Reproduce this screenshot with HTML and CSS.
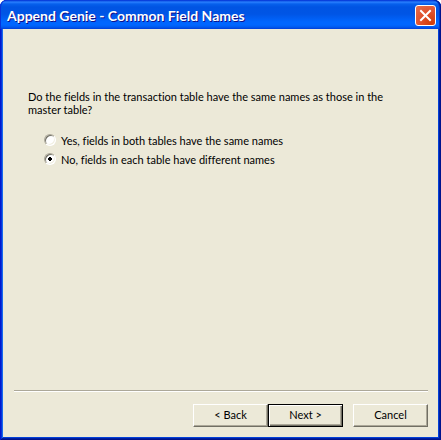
FILE: index.html
```
<!DOCTYPE html>
<html lang="en">
<head>
<meta charset="utf-8">
<title>Append Genie - Common Field Names</title>
<link rel="stylesheet" href="styles.css">
</head>
<body>
<main class="window">
  <header class="titlebar">
    <h1 class="title">Append Genie - Common Field Names</h1>
    <button class="close" type="button" aria-label="Close">
      <svg viewBox="0 0 19 19" width="19" height="19" aria-hidden="true">
        <path d="M5 5 L14 14 M14 5 L5 14" stroke="#fff" stroke-width="2" stroke-linecap="square" fill="none"/>
      </svg>
    </button>
  </header>
  <form class="body">
    <fieldset class="question">
      <legend class="prompt">Do the fields in the transaction table have the same names as those in the master table?</legend>
      <label class="option"><input class="radio" type="radio" name="names">Yes, fields in both tables have the same names</label>
      <label class="option"><input class="radio" type="radio" name="names" checked>No, fields in each table have different names</label>
    </fieldset>
    <footer class="footer">
      <button class="btn" type="button">&lt; Back</button>
      <button class="btn default" type="button">Next &gt;</button>
      <button class="btn cancel" type="button">Cancel</button>
    </footer>
  </form>
</main>
</body>
</html>
```
FILE: styles.css
```
* { box-sizing: border-box; }
html { background: #fff; }
body {
  margin: 0;
  font: 11px/13px Lato, "Liberation Sans", Arial, sans-serif;
  font-variant-ligatures: none;
  color: #000;
}
.window {
  display: flex;
  flex-direction: column;
  min-height: 100vh;
  background: #ece9d8;
  border-radius: 7px 7px 0 0;
  box-shadow: inset 1px 0 #0019cf, inset -1px 0 #00138c, inset 0 -1px #00138c,
    inset 2px 0 #0831d9, inset -2px 0 #001ea0, inset 0 -2px #001ea0,
    inset 3px 0 #166aee, inset -3px 0 #0441d8, inset 0 -3px #0441d8;
}
.titlebar {
  display: flex;
  align-items: center;
  justify-content: space-between;
  height: 29px;
  padding: 2px 5px 0 7px;
  border-radius: 7px 7px 0 0;
  background: linear-gradient(#0831d9 0, #0a4fe0 1px, #2b80ff 2px, #0660ec 4px, #0054e3 7px, #0055e5 14px, #0066ff 22px, #0066ff 25px, #005bf0 27px, #003dd7 29px);
  box-shadow: inset 1px 0 #0831d9, inset -1px 0 #00138c, inset -2px 0 #0036c4;
}
.title {
  margin: 0;
  font: bold 14px/18px "Trebuchet MS", Lato, sans-serif;
  font-variant-ligatures: none;
  color: #fff;
  text-shadow: 1px 1px #0f1089;
  white-space: nowrap;
}
.close {
  display: block;
  width: 21px;
  height: 21px;
  padding: 0;
  border: 1px solid #fff;
  border-radius: 3px;
  background: radial-gradient(circle at 80% 90%, #d03c08 0, #e0512d 50%, #e5704f 100%);
}
.close svg { display: block; }
.body {
  display: flex;
  flex: 1;
  flex-direction: column;
  justify-content: space-between;
  padding: 61px 13px 13px 14px;
}
.question {
  margin: 0;
  padding: 0 36px 0 14px;
  border: 0;
}
.prompt {
  padding: 0;
  margin-bottom: 15px;
}
.option {
  display: flex;
  align-items: center;
  gap: 5px;
  height: 19px;
  margin-left: 16px;
}
.radio {
  appearance: none;
  width: 12px;
  height: 12px;
  margin: 0 0 2px;
  border: 1px solid;
  border-color: #aca899 #fff #fff #aca899;
  border-radius: 50%;
  background: #fff;
  box-shadow: inset 1px 1px #716f64, inset -1px -1px #f1efe2;
}
.radio:checked {
  background: radial-gradient(circle, #000 0, #000 2px, #fff 2px);
}
.footer {
  display: flex;
  justify-content: flex-end;
  padding-top: 13px;
  border-top: 1px solid #aca899;
  box-shadow: inset 0 1px #fff;
}
.btn {
  width: 75px;
  height: 23px;
  padding: 0 0 2px;
  border: 1px solid;
  border-color: #fff #716f64 #716f64 #fff;
  background: #ece9d8;
  box-shadow: inset -1px -1px #aca899;
  font: inherit;
  color: #000;
}
.default {
  border-color: #000;
  box-shadow: inset 1px 1px #fff, inset -1px -1px #716f64, inset -2px -2px #aca899;
}
.cancel { margin-left: 10px; }
```
